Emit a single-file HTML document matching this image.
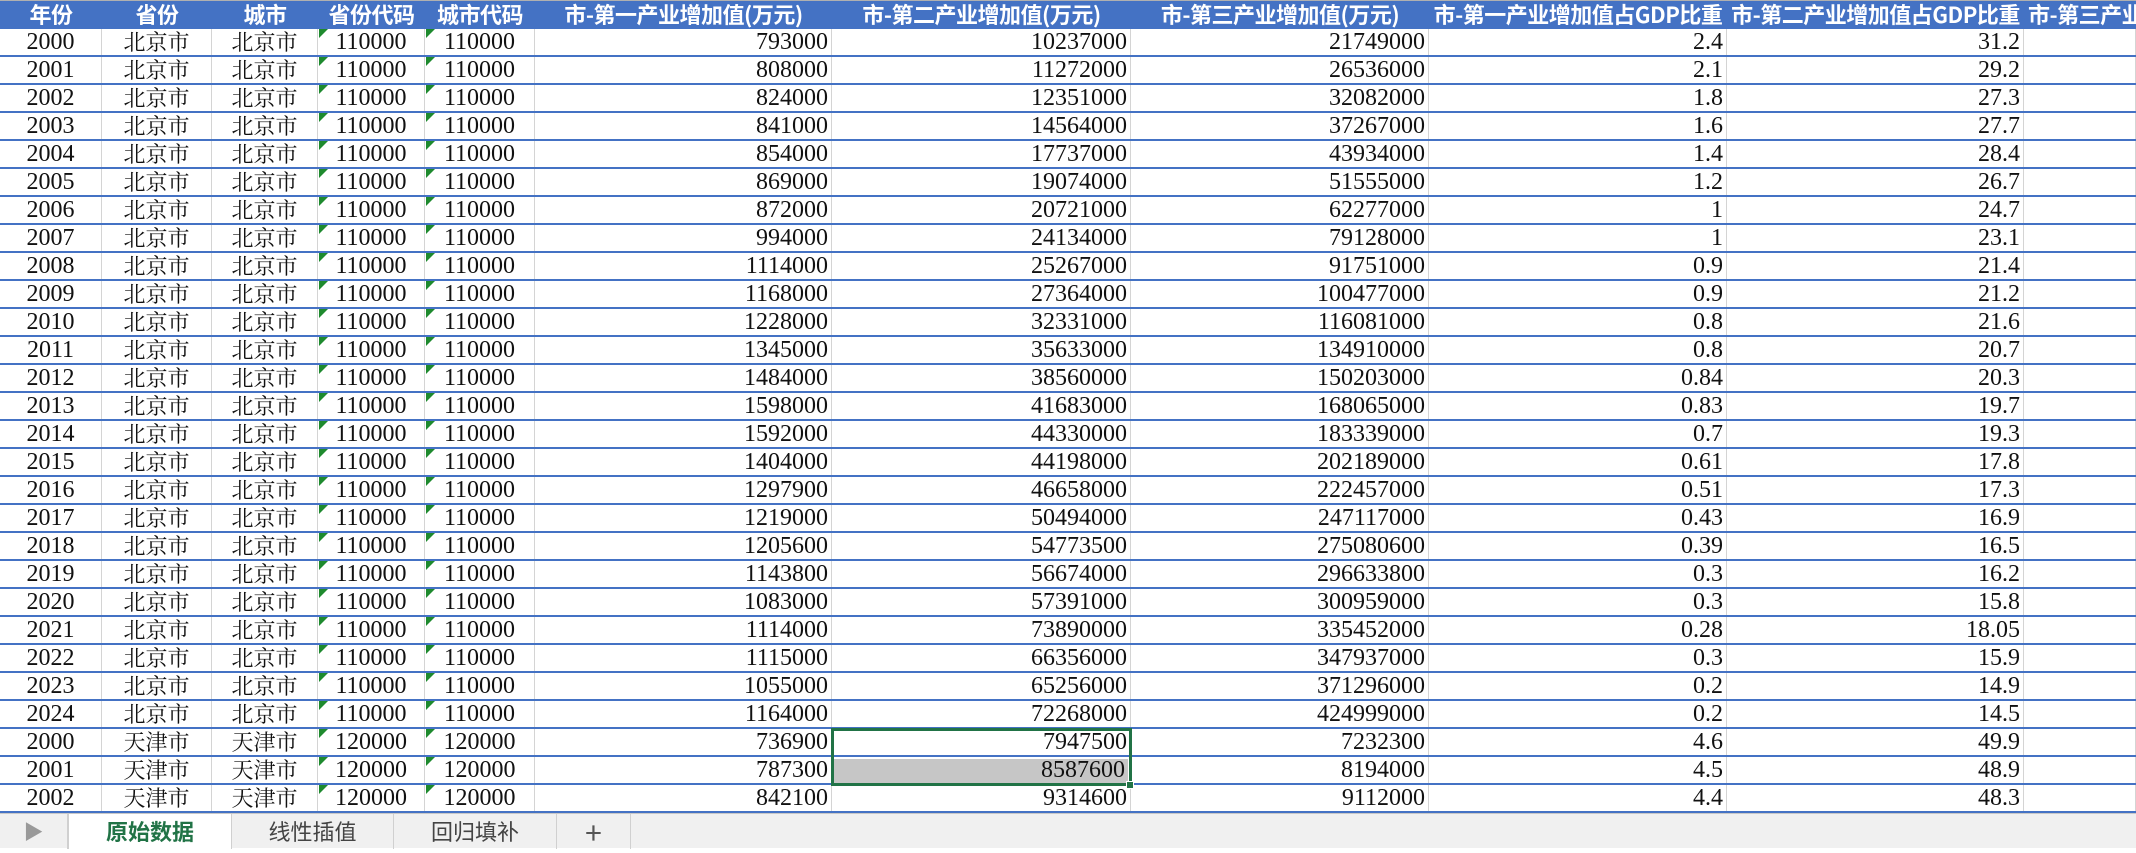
<!DOCTYPE html>
<html><head><meta charset="utf-8"><style>
*{margin:0;padding:0;box-sizing:border-box}
body{width:2136px;height:848px;overflow:hidden;background:#fff;position:relative;font-family:"Liberation Serif","Noto Serif CJK SC",serif}
.r{display:grid;grid-template-columns:102px 110px 106px 107px 110px 297px 299px 298px 298px 297px 112px;height:28px;border-bottom:2px solid #4472c4}
.r i{font-style:normal;border-right:1px solid #d4d4d4;font-size:24px;line-height:27px;white-space:nowrap;overflow:hidden;text-align:right;padding-right:3px;color:#111;position:relative}
.r i:nth-child(-n+5){text-align:center;padding:0}
.r i:nth-child(2),.r i:nth-child(3){font-family:"Noto Serif CJK SC",serif;font-size:22px;line-height:26px}
.r i:nth-child(4)::before,.r i:nth-child(5)::before{content:"";position:absolute;left:1px;top:0;border-top:9px solid #1e8a2e;border-right:9px solid transparent}
.h{display:grid;grid-template-columns:102px 110px 106px 107px 110px 297px 299px 298px 298px 297px 112px;height:29px;background:#4472c4;border-top:1px solid #b0b0b0}
.h b{color:#fff;font-family:"Noto Sans CJK SC",sans-serif;font-weight:bold;font-size:22px;letter-spacing:-0.5px;line-height:27px;text-align:center;white-space:nowrap;overflow:hidden}
.h b:last-child{text-align:left;padding-left:4px}
.sel{position:absolute;left:831px;top:728px;width:301px;height:58px;border:3px solid #217346}
.fill{position:absolute;left:834px;top:759px;width:294px;height:24px;background:#c6c6c6}
.hd{position:absolute;left:1126px;top:781px;width:8px;height:8px;background:#217346;border:1px solid #fff}
.tabs{position:absolute;left:0;top:813px;width:2136px;height:35px;background:#f0f0f0;border-top:1px solid #c8c8c8;font-family:"Noto Sans CJK SC",sans-serif;font-size:22px}
.tabs div{position:absolute;top:0;height:35px;line-height:34px;text-align:center;color:#444;border-right:1px solid #d0d0d0}
</style></head><body>
<div class="h"><b>年份</b><b>省份</b><b>城市</b><b>省份代码</b><b>城市代码</b><b>市-第一产业增加值(万元)</b><b>市-第二产业增加值(万元)</b><b>市-第三产业增加值(万元)</b><b>市-第一产业增加值占GDP比重</b><b>市-第二产业增加值占GDP比重</b><b>市-第三产业</b></div>
<div class="r"><i>2000</i><i>北京市</i><i>北京市</i><i>110000</i><i>110000</i><i>793000</i><i>10237000</i><i>21749000</i><i>2.4</i><i>31.2</i><i></i></div>
<div class="r"><i>2001</i><i>北京市</i><i>北京市</i><i>110000</i><i>110000</i><i>808000</i><i>11272000</i><i>26536000</i><i>2.1</i><i>29.2</i><i></i></div>
<div class="r"><i>2002</i><i>北京市</i><i>北京市</i><i>110000</i><i>110000</i><i>824000</i><i>12351000</i><i>32082000</i><i>1.8</i><i>27.3</i><i></i></div>
<div class="r"><i>2003</i><i>北京市</i><i>北京市</i><i>110000</i><i>110000</i><i>841000</i><i>14564000</i><i>37267000</i><i>1.6</i><i>27.7</i><i></i></div>
<div class="r"><i>2004</i><i>北京市</i><i>北京市</i><i>110000</i><i>110000</i><i>854000</i><i>17737000</i><i>43934000</i><i>1.4</i><i>28.4</i><i></i></div>
<div class="r"><i>2005</i><i>北京市</i><i>北京市</i><i>110000</i><i>110000</i><i>869000</i><i>19074000</i><i>51555000</i><i>1.2</i><i>26.7</i><i></i></div>
<div class="r"><i>2006</i><i>北京市</i><i>北京市</i><i>110000</i><i>110000</i><i>872000</i><i>20721000</i><i>62277000</i><i>1</i><i>24.7</i><i></i></div>
<div class="r"><i>2007</i><i>北京市</i><i>北京市</i><i>110000</i><i>110000</i><i>994000</i><i>24134000</i><i>79128000</i><i>1</i><i>23.1</i><i></i></div>
<div class="r"><i>2008</i><i>北京市</i><i>北京市</i><i>110000</i><i>110000</i><i>1114000</i><i>25267000</i><i>91751000</i><i>0.9</i><i>21.4</i><i></i></div>
<div class="r"><i>2009</i><i>北京市</i><i>北京市</i><i>110000</i><i>110000</i><i>1168000</i><i>27364000</i><i>100477000</i><i>0.9</i><i>21.2</i><i></i></div>
<div class="r"><i>2010</i><i>北京市</i><i>北京市</i><i>110000</i><i>110000</i><i>1228000</i><i>32331000</i><i>116081000</i><i>0.8</i><i>21.6</i><i></i></div>
<div class="r"><i>2011</i><i>北京市</i><i>北京市</i><i>110000</i><i>110000</i><i>1345000</i><i>35633000</i><i>134910000</i><i>0.8</i><i>20.7</i><i></i></div>
<div class="r"><i>2012</i><i>北京市</i><i>北京市</i><i>110000</i><i>110000</i><i>1484000</i><i>38560000</i><i>150203000</i><i>0.84</i><i>20.3</i><i></i></div>
<div class="r"><i>2013</i><i>北京市</i><i>北京市</i><i>110000</i><i>110000</i><i>1598000</i><i>41683000</i><i>168065000</i><i>0.83</i><i>19.7</i><i></i></div>
<div class="r"><i>2014</i><i>北京市</i><i>北京市</i><i>110000</i><i>110000</i><i>1592000</i><i>44330000</i><i>183339000</i><i>0.7</i><i>19.3</i><i></i></div>
<div class="r"><i>2015</i><i>北京市</i><i>北京市</i><i>110000</i><i>110000</i><i>1404000</i><i>44198000</i><i>202189000</i><i>0.61</i><i>17.8</i><i></i></div>
<div class="r"><i>2016</i><i>北京市</i><i>北京市</i><i>110000</i><i>110000</i><i>1297900</i><i>46658000</i><i>222457000</i><i>0.51</i><i>17.3</i><i></i></div>
<div class="r"><i>2017</i><i>北京市</i><i>北京市</i><i>110000</i><i>110000</i><i>1219000</i><i>50494000</i><i>247117000</i><i>0.43</i><i>16.9</i><i></i></div>
<div class="r"><i>2018</i><i>北京市</i><i>北京市</i><i>110000</i><i>110000</i><i>1205600</i><i>54773500</i><i>275080600</i><i>0.39</i><i>16.5</i><i></i></div>
<div class="r"><i>2019</i><i>北京市</i><i>北京市</i><i>110000</i><i>110000</i><i>1143800</i><i>56674000</i><i>296633800</i><i>0.3</i><i>16.2</i><i></i></div>
<div class="r"><i>2020</i><i>北京市</i><i>北京市</i><i>110000</i><i>110000</i><i>1083000</i><i>57391000</i><i>300959000</i><i>0.3</i><i>15.8</i><i></i></div>
<div class="r"><i>2021</i><i>北京市</i><i>北京市</i><i>110000</i><i>110000</i><i>1114000</i><i>73890000</i><i>335452000</i><i>0.28</i><i>18.05</i><i></i></div>
<div class="r"><i>2022</i><i>北京市</i><i>北京市</i><i>110000</i><i>110000</i><i>1115000</i><i>66356000</i><i>347937000</i><i>0.3</i><i>15.9</i><i></i></div>
<div class="r"><i>2023</i><i>北京市</i><i>北京市</i><i>110000</i><i>110000</i><i>1055000</i><i>65256000</i><i>371296000</i><i>0.2</i><i>14.9</i><i></i></div>
<div class="r"><i>2024</i><i>北京市</i><i>北京市</i><i>110000</i><i>110000</i><i>1164000</i><i>72268000</i><i>424999000</i><i>0.2</i><i>14.5</i><i></i></div>
<div class="r"><i>2000</i><i>天津市</i><i>天津市</i><i>120000</i><i>120000</i><i>736900</i><i>7947500</i><i>7232300</i><i>4.6</i><i>49.9</i><i></i></div>
<div class="r"><i>2001</i><i>天津市</i><i>天津市</i><i>120000</i><i>120000</i><i>787300</i><i></i><i>8194000</i><i>4.5</i><i>48.9</i><i></i></div>
<div class="r"><i>2002</i><i>天津市</i><i>天津市</i><i>120000</i><i>120000</i><i>842100</i><i>9314600</i><i>9112000</i><i>4.4</i><i>48.3</i><i></i></div>
<div class="fill"></div>
<div style="position:absolute;left:834px;top:757px;width:294px;height:28px;text-align:right;padding-right:3px;font-size:24px;line-height:27px;color:#111">8587600</div>
<div class="sel"></div><div class="hd"></div>
<div class="tabs">
<div style="left:0;width:68px;color:#999;font-size:20px">&#9654;</div>
<div style="left:68px;width:164px;background:#fff;color:#217346;font-weight:bold;border-left:1px solid #d0d0d0">原始数据</div>
<div style="left:232px;width:162px">线性插值</div>
<div style="left:394px;width:163px">回归填补</div>
<div style="left:557px;width:74px;font-size:30px;color:#555">+</div>
</div>
</body></html>
